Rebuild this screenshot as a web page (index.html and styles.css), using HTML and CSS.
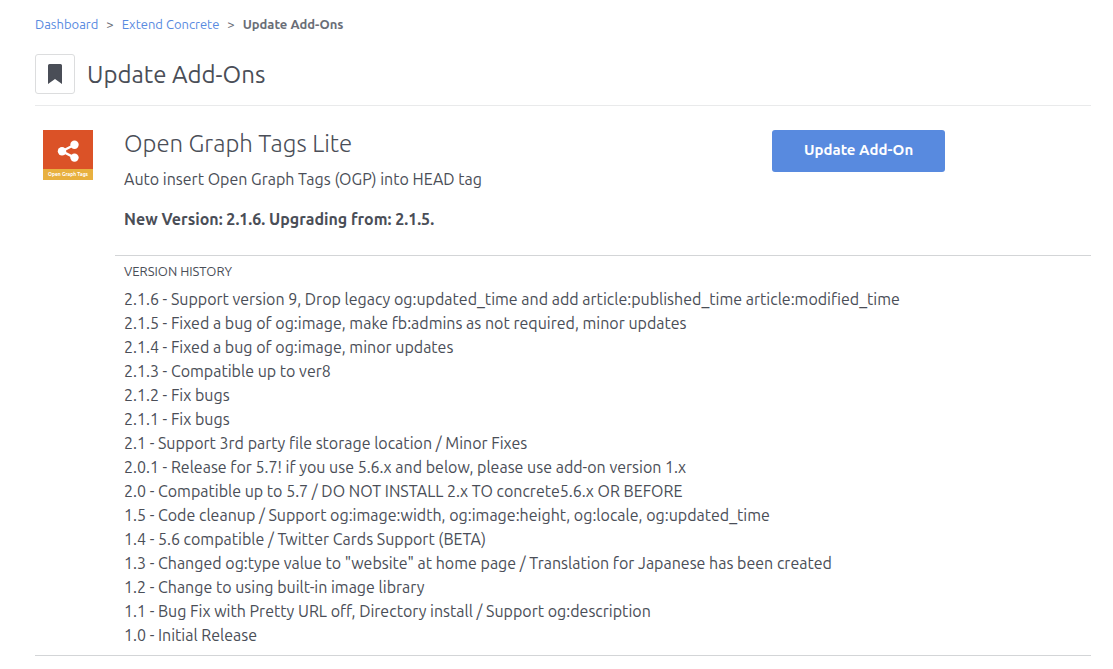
FILE: index.html
```html
<!DOCTYPE html>
<html lang="en">
<head>
<meta charset="utf-8">
<meta name="viewport" content="width=device-width, initial-scale=1">
<title>Update Add-Ons</title>
<link rel="stylesheet" href="styles.css">
</head>
<body>
<div class="page">
  <nav class="breadcrumb" aria-label="Breadcrumb">
    <a href="#">Dashboard</a>
    <span class="separator">&gt;</span>
    <a href="#">Extend Concrete</a>
    <span class="separator">&gt;</span>
    <strong>Update Add-Ons</strong>
  </nav>
  <header class="page-header">
    <button class="bookmark" type="button" aria-label="Bookmark this page">
      <svg width="14" height="20" viewBox="0 0 14 20" aria-hidden="true"><path fill="#4a4e57" d="M1.500 0h11A1.500 1.500 0 0 1 14 1.500V20l-7-5-7 5V1.500A1.500 1.500 0 0 1 1.500 0z"/></svg>
    </button>
    <h1 class="page-title">Update Add-Ons</h1>
  </header>
  <main class="addon">
    <svg class="addon-icon" width="50" height="50" viewBox="0 0 50 50" role="img" aria-label="Open Graph Tags">
      <path fill="#db5227" d="M0 0h50v39H0z"/>
      <path fill="#e8b03f" d="M0 39h50v11H0z"/>
      <path fill="none" stroke="#fff" stroke-width="2.4" d="M31.500 14.800 19 21.200l12.500 6.400"/>
      <circle cx="31.500" cy="14.800" r="4.200" fill="#fff"/>
      <circle cx="19" cy="21.200" r="4.200" fill="#fff"/>
      <circle cx="31.500" cy="27.600" r="4.200" fill="#fff"/>
      <text class="icon-label" x="25" y="46" text-anchor="middle">Open Graph Tags</text>
    </svg>
    <div class="addon-body">
      <section class="summary">
        <div class="details">
          <h2 class="addon-name">Open Graph Tags Lite</h2>
          <p class="description">Auto insert Open Graph Tags (OGP) into HEAD tag</p>
          <p class="version">New Version: 2.1.6. Upgrading from: 2.1.5.</p>
        </div>
        <div class="actions"><button class="update" type="button">Update Add-On</button></div>
      </section>
      <section class="history">
        <h3 class="history-title">VERSION HISTORY</h3>
        <ul class="history-list">
          <li>2.1.6 - Support version 9, Drop legacy og:updated_time and add article:published_time article:modified_time</li>
          <li>2.1.5 - Fixed a bug of og:image, make fb:admins as not required, minor updates</li>
          <li>2.1.4 - Fixed a bug of og:image, minor updates</li>
          <li>2.1.3 - Compatible up to ver8</li>
          <li>2.1.2 - Fix bugs</li>
          <li>2.1.1 - Fix bugs</li>
          <li>2.1 - Support 3rd party file storage location / Minor Fixes</li>
          <li>2.0.1 - Release for 5.7! if you use 5.6.x and below, please use add-on version 1.x</li>
          <li>2.0 - Compatible up to 5.7 / DO NOT INSTALL 2.x TO concrete5.6.x OR BEFORE</li>
          <li>1.5 - Code cleanup / Support og:image:width, og:image:height, og:locale, og:updated_time</li>
          <li>1.4 - 5.6 compatible / Twitter Cards Support (BETA)</li>
          <li>1.3 - Changed og:type value to "website" at home page / Translation for Japanese has been created</li>
          <li>1.2 - Change to using built-in image library</li>
          <li>1.1 - Bug Fix with Pretty URL off, Directory install / Support og:description</li>
          <li>1.0 - Initial Release</li>
        </ul>
      </section>
    </div>
  </main>
</div>
</body>
</html>
```

FILE: styles.css
```css
* {
  box-sizing: border-box;
}

body {
  margin: 0;
  background: #fff;
  color: #4a4e57;
  font-family: Ubuntu, "Noto Sans", "Open Sans", sans-serif;
  font-size: 16px;
  line-height: 24px;
}

h1, h2, h3, p, ul {
  margin: 0;
  padding: 0;
}

.page {
  padding: 12px 22px 13px 35px;
}

.breadcrumb {
  display: flex;
  gap: 8px;
  font-size: 13px;
}

.breadcrumb a {
  color: #588adf;
  text-decoration: none;
}

.separator,
.breadcrumb strong {
  color: #6a6e77;
}

.page-header {
  display: flex;
  align-items: center;
  gap: 12px;
  margin-top: 18px;
  padding-bottom: 11px;
  border-bottom: 1px solid #e9eaeb;
}

.bookmark {
  display: flex;
  align-items: center;
  justify-content: center;
  width: 40px;
  height: 40px;
  padding: 0;
  border: 1px solid #dcddde;
  border-radius: 3px;
  background: #fff;
}

.page-title {
  padding-top: 2px;
  font-size: 24px;
  font-weight: 400;
  line-height: 32px;
}

.addon {
  display: flex;
  gap: 22px;
  padding: 24px 0 8px 8px;
  border-bottom: 1px solid #d3d5d7;
}

.addon-icon {
  flex: none;
}

.icon-label {
  fill: #fff;
  font-size: 5px;
  font-weight: 700;
}

.addon-body {
  flex: 1;
}

.summary {
  display: grid;
  grid-template-columns: 2fr 1fr;
  gap: 10px;
  padding: 0 0 24px 9px;
}

.addon-name {
  margin-bottom: 9px;
  font-size: 24px;
  font-weight: 300;
  line-height: 28px;
}

.version {
  margin-top: 16px;
  font-weight: 700;
}

.update {
  height: 42px;
  padding: 0 32px 3px;
  border: 0;
  border-radius: 3px;
  background: #588adf;
  color: #fff;
  font-family: inherit;
  font-size: 15px;
  font-weight: 700;
}

.history {
  padding: 3px 0 0 9px;
  border-top: 1px solid #d3d5d7;
}

.history-title {
  margin-bottom: 4px;
  font-size: 13px;
  font-weight: 400;
}

.history-list {
  list-style: none;
}
```
